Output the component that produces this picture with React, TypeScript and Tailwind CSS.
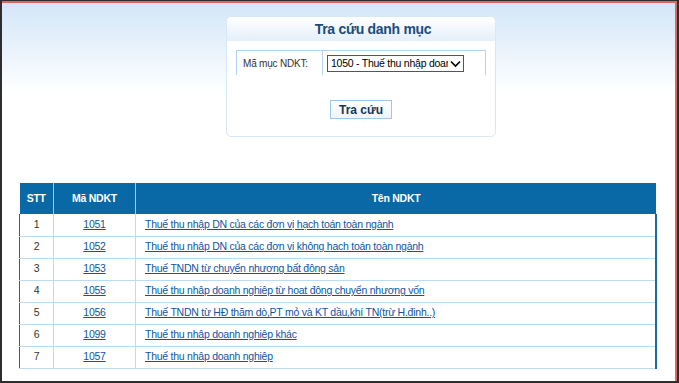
import React from 'react';

const rows = [
  { stt: 1, code: '1051', name: 'Thuế thu nhập DN của các đơn vị hạch toán toàn ngành' },
  { stt: 2, code: '1052', name: 'Thuế thu nhập DN của các đơn vị không hạch toán toàn ngành' },
  { stt: 3, code: '1053', name: 'Thuế TNDN từ chuyển nhượng bất động sản' },
  { stt: 4, code: '1055', name: 'Thuế thu nhập doanh nghiệp từ hoạt động chuyển nhượng vốn' },
  { stt: 5, code: '1056', name: 'Thuế TNDN từ HĐ thăm dò,PT mỏ và KT dầu,khí TN(trừ H.định..)' },
  { stt: 6, code: '1099', name: 'Thuế thu nhập doanh nghiệp khác' },
  { stt: 7, code: '1057', name: 'Thuế thu nhập doanh nghiệp' },
];

export default function App() {
  return (
    <div
      className="w-[679px] h-[383px] overflow-hidden border-t border-l-2 border-r-2 border-b-2 border-[#2e2e2e] bg-white"
      style={{ fontFamily: '"Liberation Sans", Arial, sans-serif' }}
    >
      <div className="h-full border-t-2 border-r-2 border-[#e0675b] bg-[linear-gradient(to_bottom,#d3e7f8_0px,#e6f1fb_40px,#ffffff_90px)]">
        {/* Search panel */}
        <div className="pt-[13px] pl-[224px]">
          <div className="w-[270px] h-[121px] rounded-[5px] border border-[#d6e7f6] bg-white">
            <div className="h-[24px] rounded-t-[5px] bg-[linear-gradient(to_bottom,#ffffff,#e3effa)] flex items-center justify-center">
              <h1 className="text-[14px] font-bold text-[#1b4c7c] tracking-[-0.3px] pl-[24px]">Tra cứu danh mục</h1>
            </div>
            <div className="mx-[9px] mt-[9px] h-[25px] flex border-t border-l border-r border-[#b3d4f0]">
              <div className="w-[86px] border-r border-[#b3d4f0] flex items-center pl-[6px] text-[10px] tracking-[-0.2px] text-[#333]">
                Mã mục NDKT:
              </div>
              <div className="flex items-start pt-[4px] pl-[4px]">
                <div className="w-[137px] h-[17px] border border-[#555] bg-white flex items-center justify-between pl-[3px] pr-[2px] text-[10.5px] tracking-[-0.25px] text-black">
                  <span className="whitespace-nowrap overflow-hidden w-[117px]">1050 - Thuế thu nhập doanh</span>
                  <svg width="11" height="8" viewBox="0 0 11 8">
                    <path d="M1 1.5 L5.5 6 L10 1.5" fill="none" stroke="#000" strokeWidth="1.6" />
                  </svg>
                </div>
              </div>
            </div>
            <div className="flex justify-center mt-[25px]">
              <button className="w-[62px] h-[19px] border border-[#9cc8ec] bg-[linear-gradient(to_bottom,#ffffff,#eef5fc)] text-[12px] font-bold text-[#14365a]">
                Tra cứu
              </button>
            </div>
          </div>
        </div>

        {/* Result table */}
        <div className="pl-[17px] pt-[46px]">
          <table className="w-[638px] border-collapse text-[10.5px] tracking-[-0.25px]">
            <thead>
              <tr className="h-[31px] bg-[#0969a6] text-white font-bold">
                <th className="w-[34px] border-r border-[#9fcbef] font-bold">STT</th>
                <th className="w-[82px] border-r border-[#9fcbef] font-bold">Mã NDKT</th>
                <th className="font-bold">Tên NDKT</th>
              </tr>
            </thead>
            <tbody className="border-l border-r-2 border-[#1b6aa8]">
              {rows.map((r) => (
                <tr key={r.stt} className="h-[22px] border-b border-[#b9dbf5]">
                  <td className="text-center text-[#333] border-r border-[#b9dbf5]">{r.stt}</td>
                  <td className="text-center border-r border-[#b9dbf5]">
                    <a href="#" className="text-[#0d55a3] underline">{r.code}</a>
                  </td>
                  <td className="pl-[9px]">
                    <a href="#" className="text-[#0d55a3] underline whitespace-nowrap">{r.name}</a>
                  </td>
                </tr>
              ))}
            </tbody>
          </table>
        </div>
      </div>
    </div>
  );
}
